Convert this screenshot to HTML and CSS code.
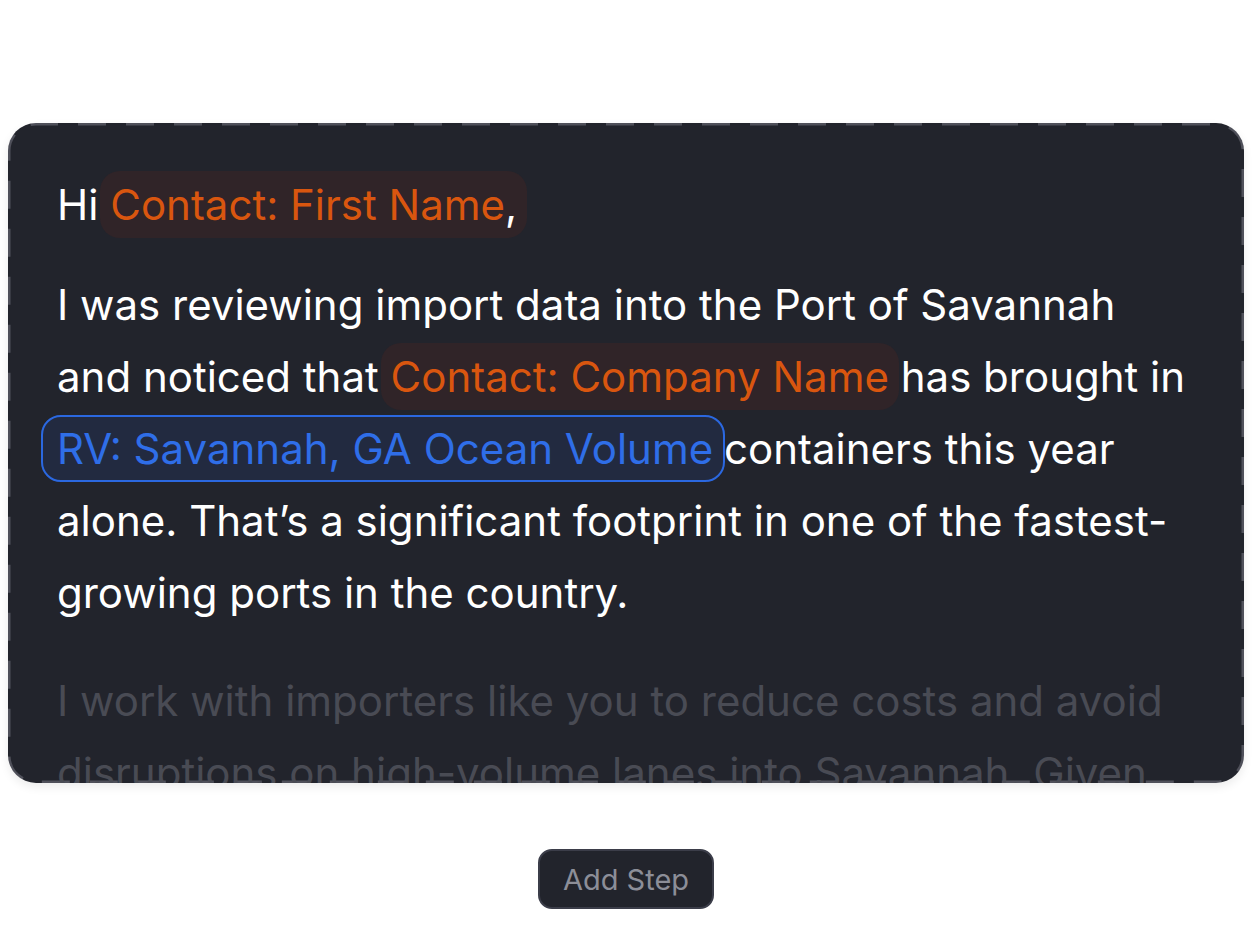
FILE: index.html
```html
<!DOCTYPE html>
<html>
<head>
    <title>Email Step</title>
    <link rel="stylesheet" href="styles.css">
</head>
<body>
    <div class="page">
        <div class="card">
            <p class="greet">Hi <span class="chip chip-first">Contact: First Name</span>,</p>
            <p>I was reviewing import data into the Port of Savannah and noticed that <span class="chip">Contact: Company Name</span> has brought in <span class="chip-rv">RV: Savannah, GA Ocean Volume</span> containers this year alone. That’s a significant footprint in one of the fastest-growing ports in the country.</p>
            <p class="faded">I work with importers like you to reduce costs and avoid disruptions on high-volume lanes into Savannah. Given your volume, I’d love to share a few ideas.</p>
        </div>
        <div class="wrap">
            <button type="button" class="add">Add Step</button>
        </div>
    </div>
</body>
</html>
```

FILE: styles.css
```css
body {
    font-family: Inter, "Noto Sans", sans-serif;
    margin: 0;
    background: #fff;
}
.page {
    padding: 123px 9px 0 8px;
}
.card {
    box-sizing: border-box;
    height: 660px;
    background-color: #22242c;
    background-image: url("data:image/svg+xml,%3Csvg xmlns='http://www.w3.org/2000/svg'%3E%3Crect width='100%25' height='100%25' rx='28' ry='28' fill='none' stroke='%234f505a' stroke-width='5' stroke-dasharray='28 20' stroke-dashoffset='6'/%3E%3C/svg%3E");
    border-radius: 28px;
    padding: 46px 49px 0 49px;
    overflow: hidden;
    box-shadow: 0 4px 10px rgba(0, 0, 0, 0.08);
    color: #fff;
    font-size: 42px;
    line-height: 72px;
}
.card p {
    margin: 0 0 28px 0;
}
.card p.faded {
    margin-top: 36px;
    color: #494b54;
}
.chip {
    color: #d9560f;
    background-color: #302428;
    border-radius: 20px;
    padding: 8px 10px;
    margin: 0 -10px;
}
.chip-first {
    padding-right: 22px;
    margin-right: -22px;
}
.chip-rv {
    color: #2f6ee8;
    background-color: #222a40;
    border: 2px solid #2b68e0;
    border-radius: 20px;
    padding: 6px 10px 6px 14px;
    margin: 0 -13px 0 -16px;
}
.wrap {
    text-align: center;
    padding-top: 66px;
}
.add {
    font-family: Inter, "Noto Sans", sans-serif;
    font-size: 29px;
    color: #8c8e98;
    background-color: #22242c;
    border: 2px solid #3b3d49;
    border-radius: 14px;
    padding: 0 23px;
    height: 60px;
    cursor: pointer;
}
```
